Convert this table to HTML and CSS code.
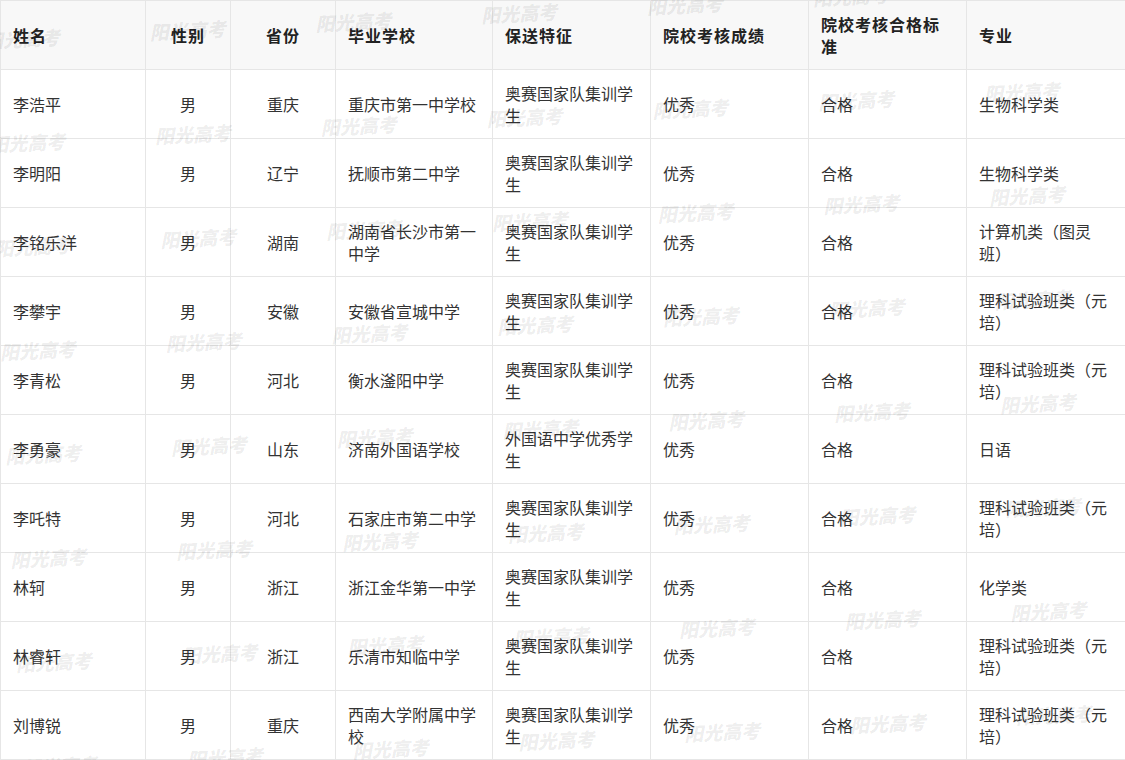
FILE: index.html
```html
<!DOCTYPE html>
<html lang="zh-CN">
<head>
<meta charset="utf-8">
<title>保送生名单</title>
<link rel="stylesheet" href="styles.css">
</head>
<body>
<div class="page">
  <table class="list">
    <colgroup>
      <col class="c-name"><col class="c-sex"><col class="c-prov"><col class="c-school">
      <col class="c-feat"><col class="c-score"><col class="c-std"><col class="c-major">
    </colgroup>
    <thead>
      <tr>
        <th>姓名</th><th class="center">性别</th><th class="center">省份</th><th>毕业学校</th>
        <th>保送特征</th><th>院校考核成绩</th><th>院校考核合格标准</th><th>专业</th>
      </tr>
    </thead>
    <tbody>
      <tr><td>李浩平</td><td class="center">男</td><td class="center">重庆</td><td>重庆市第一中学校</td><td>奥赛国家队集训学生</td><td>优秀</td><td>合格</td><td>生物科学类</td></tr>
      <tr><td>李明阳</td><td class="center">男</td><td class="center">辽宁</td><td>抚顺市第二中学</td><td>奥赛国家队集训学生</td><td>优秀</td><td>合格</td><td>生物科学类</td></tr>
      <tr><td>李铭乐洋</td><td class="center">男</td><td class="center">湖南</td><td>湖南省长沙市第一中学</td><td>奥赛国家队集训学生</td><td>优秀</td><td>合格</td><td>计算机类（图灵班）</td></tr>
      <tr><td>李攀宇</td><td class="center">男</td><td class="center">安徽</td><td>安徽省宣城中学</td><td>奥赛国家队集训学生</td><td>优秀</td><td>合格</td><td>理科试验班类（元培）</td></tr>
      <tr><td>李青松</td><td class="center">男</td><td class="center">河北</td><td>衡水滏阳中学</td><td>奥赛国家队集训学生</td><td>优秀</td><td>合格</td><td>理科试验班类（元培）</td></tr>
      <tr><td>李勇豪</td><td class="center">男</td><td class="center">山东</td><td>济南外国语学校</td><td>外国语中学优秀学生</td><td>优秀</td><td>合格</td><td>日语</td></tr>
      <tr><td>李吒特</td><td class="center">男</td><td class="center">河北</td><td>石家庄市第二中学</td><td>奥赛国家队集训学生</td><td>优秀</td><td>合格</td><td>理科试验班类（元培）</td></tr>
      <tr><td>林轲</td><td class="center">男</td><td class="center">浙江</td><td>浙江金华第一中学</td><td>奥赛国家队集训学生</td><td>优秀</td><td>合格</td><td>化学类</td></tr>
      <tr><td>林睿轩</td><td class="center">男</td><td class="center">浙江</td><td>乐清市知临中学</td><td>奥赛国家队集训学生</td><td>优秀</td><td>合格</td><td>理科试验班类（元培）</td></tr>
      <tr><td>刘博锐</td><td class="center">男</td><td class="center">重庆</td><td>西南大学附属中学校</td><td>奥赛国家队集训学生</td><td>优秀</td><td>合格</td><td>理科试验班类（元培）</td></tr>
    </tbody>
  </table>

  <div class="wm-layer" aria-hidden="true">
    <div class="wm-grid">
      <span>阳光高考</span><span>阳光高考</span><span>阳光高考</span><span>阳光高考</span><span>阳光高考</span><span>阳光高考</span><span>阳光高考</span>
      <span>阳光高考</span><span>阳光高考</span><span>阳光高考</span><span>阳光高考</span><span>阳光高考</span><span>阳光高考</span><span>阳光高考</span>
      <span>阳光高考</span><span>阳光高考</span><span>阳光高考</span><span>阳光高考</span><span>阳光高考</span><span>阳光高考</span><span>阳光高考</span>
      <span>阳光高考</span><span>阳光高考</span><span>阳光高考</span><span>阳光高考</span><span>阳光高考</span><span>阳光高考</span><span>阳光高考</span>
      <span>阳光高考</span><span>阳光高考</span><span>阳光高考</span><span>阳光高考</span><span>阳光高考</span><span>阳光高考</span><span>阳光高考</span>
      <span>阳光高考</span><span>阳光高考</span><span>阳光高考</span><span>阳光高考</span><span>阳光高考</span><span>阳光高考</span><span>阳光高考</span>
      <span>阳光高考</span><span>阳光高考</span><span>阳光高考</span><span>阳光高考</span><span>阳光高考</span><span>阳光高考</span><span>阳光高考</span>
      <span>阳光高考</span><span>阳光高考</span><span>阳光高考</span><span>阳光高考</span><span>阳光高考</span><span>阳光高考</span><span>阳光高考</span>
      <span>阳光高考</span><span>阳光高考</span><span>阳光高考</span><span>阳光高考</span><span>阳光高考</span><span>阳光高考</span><span>阳光高考</span>
    </div>
  </div>
</div>
</body>
</html>
```

FILE: styles.css
```css
html, body {
  margin: 0;
  padding: 0;
  background: #ffffff;
}

body {
  font-family: "Noto Sans CJK SC", "Liberation Sans", sans-serif;
  color: #333333;
  overflow: hidden;
}

.page {
  position: relative;
  width: 1125px;
  height: 760px;
  overflow: hidden;
}

.list {
  width: 1125px;
  border-collapse: collapse;
  table-layout: fixed;
  font-size: 16px;
  line-height: 22px;
}

.c-name { width: 145px; }
.c-sex { width: 85px; }
.c-prov { width: 105px; }
.c-school { width: 157px; }
.c-feat { width: 158px; }
.c-score { width: 158px; }
.c-std { width: 158px; }
.c-major { width: 159px; }

.list tr {
  height: 69px;
}

.list th,
.list td {
  border: 1px solid #e6e6e6;
  padding: 0 12px;
  text-align: left;
  vertical-align: middle;
  word-break: break-all;
}

.list th {
  background: #f8f8f8;
  font-weight: 700;
  color: #222222;
  letter-spacing: 1px;
}

.list .center {
  text-align: center;
}

.wm-layer {
  position: absolute;
  inset: 0;
  pointer-events: none;
  overflow: hidden;
}

.wm-grid {
  position: absolute;
  left: 149px;
  top: 20px;
  display: grid;
  grid-template-columns: repeat(7, 166px);
  grid-auto-rows: 104px;
  transform-origin: 0 0;
  transform: rotate(-2.93deg) translate(-166px, -104px);
}

.wm-grid span {
  font-family: "Noto Sans CJK SC", sans-serif;
  font-size: 19px;
  line-height: 24px;
  font-weight: 900;
  font-style: italic;
  color: rgba(0, 0, 0, 0.08);
  white-space: nowrap;
}
```
